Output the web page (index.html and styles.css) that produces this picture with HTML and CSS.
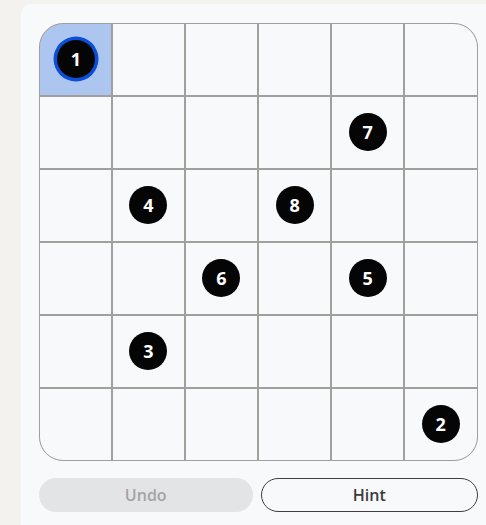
FILE: index.html
```html
<!DOCTYPE html>
<html lang="en">
<head>
<meta charset="utf-8">
<title>Number path puzzle</title>
<link rel="stylesheet" href="styles.css">
</head>
<body>
<main class="card">
  <div class="board">
    <div class="cell selected"><span class="dot active">1</span></div>
    <div class="cell"></div>
    <div class="cell"></div>
    <div class="cell"></div>
    <div class="cell"></div>
    <div class="cell"></div>

    <div class="cell"></div>
    <div class="cell"></div>
    <div class="cell"></div>
    <div class="cell"></div>
    <div class="cell"><span class="dot">7</span></div>
    <div class="cell"></div>

    <div class="cell"></div>
    <div class="cell"><span class="dot">4</span></div>
    <div class="cell"></div>
    <div class="cell"><span class="dot">8</span></div>
    <div class="cell"></div>
    <div class="cell"></div>

    <div class="cell"></div>
    <div class="cell"></div>
    <div class="cell"><span class="dot">6</span></div>
    <div class="cell"></div>
    <div class="cell"><span class="dot">5</span></div>
    <div class="cell"></div>

    <div class="cell"></div>
    <div class="cell"><span class="dot">3</span></div>
    <div class="cell"></div>
    <div class="cell"></div>
    <div class="cell"></div>
    <div class="cell"></div>

    <div class="cell"></div>
    <div class="cell"></div>
    <div class="cell"></div>
    <div class="cell"></div>
    <div class="cell"></div>
    <div class="cell"><span class="dot">2</span></div>
  </div>
  <div class="actions">
    <button class="btn btn-undo" disabled>Undo</button>
    <button class="btn btn-hint">Hint</button>
  </div>
</main>
</body>
</html>
```
FILE: styles.css
```css
html, body {
  margin: 0;
  padding: 0;
}
body {
  background: #f3f2ee;
  overflow: hidden;
  font-family: "Open Sans", "Noto Sans", "Liberation Sans", sans-serif;
  width: 486px;
  height: 525px;
}
.card {
  box-sizing: border-box;
  margin: 4px 0 0 21px;
  width: 474px;
  height: 521px;
  padding: 18.5px 17.5px 0 17.5px;
  background: #f8f9fb;
  border-radius: 10px 0 0 0;
}
.board {
  display: grid;
  grid-template-columns: repeat(6, 1fr);
  grid-template-rows: repeat(6, 71.5px);
  gap: 1.5px;
  width: 439px;
  box-sizing: border-box;
  border: 1.5px solid #a09f9b;
  border-radius: 24px;
  background: #a09f9b;
  overflow: hidden;
}
.cell {
  background: #f8f9fb;
  display: flex;
  align-items: center;
  justify-content: center;
}
.cell.selected {
  background: #adc6ef;
}
.dot {
  width: 38px;
  height: 38px;
  border-radius: 50%;
  background: #050505;
  color: #ffffff;
  font-weight: 700;
  font-size: 18px;
  display: flex;
  align-items: center;
  justify-content: center;
  line-height: 1;
}
.dot.active {
  box-shadow: 0 0 0 3.5px #0b4fd9;
  margin-left: 1px;
}
.actions {
  display: flex;
  gap: 8px;
  margin-top: 16.5px;
  width: 439px;
}
.btn {
  flex: 1;
  height: 34px;
  border-radius: 17px;
  font-family: inherit;
  font-size: 16px;
  font-weight: 600;
  padding: 0;
}
.btn-undo {
  background: #e3e4e6;
  border: none;
  color: #a3a3a5;
}
.btn-hint {
  background: transparent;
  border: 1px solid #3f3f42;
  color: #3a3a3c;
}
```
